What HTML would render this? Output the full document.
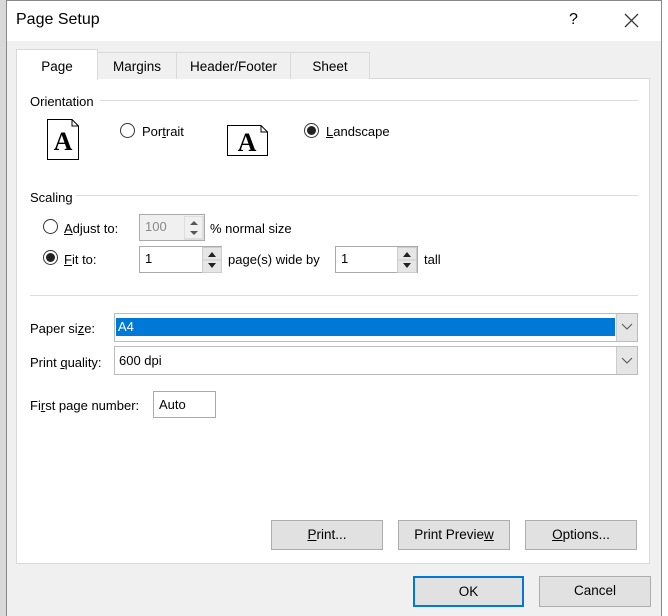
<!DOCTYPE html>
<html><head><style>
*{box-sizing:border-box;margin:0;padding:0}
body{width:668px;height:616px;overflow:hidden;background:#e8e8e8;font-family:"Liberation Sans",sans-serif;font-size:13px;color:#000;position:relative}
.a{position:absolute}
.sheetL{left:0;top:0;width:7px;height:616px;background:#d9d9d9}
.sheetR{left:661px;top:0;width:7px;height:616px;background:#fff}
.dlg{left:6px;top:0;width:656px;height:616px;background:#f0f0f0;border-left:1px solid #888;border-right:1px solid #888;border-top:1px solid #888}
.title{left:7px;top:1px;width:654px;height:40px;background:#fff}
.panel{left:16px;top:78px;width:634px;height:486px;background:#fff;border:1px solid #d9d9d9}
.tab{top:52px;height:27px;background:#f0f0f0;border:1px solid #d9d9d9;border-bottom:none;text-align:center;line-height:27px;font-size:13.5px}
.line{height:1px;background:#dcdcdc}
.radio{width:15px;height:15px;border:1px solid #333;border-radius:50%;background:#fff}
.radio.on::after{content:"";position:absolute;left:2px;top:2px;width:9px;height:9px;border-radius:50%;background:#222}
.box{border:1px solid #aaa;background:#fff;padding-left:5px;line-height:24px}
.btn{height:30px;background:#e1e1e1;border:1px solid #adadad;text-align:center;line-height:28px;font-size:13.5px}
u{text-decoration:underline}
</style></head><body>
<div class="a sheetL"></div><div class="a sheetR"></div>
<div class="a dlg"></div>
<div class="a title"></div>
<div class="a" style="left:16px;top:11px;font-size:16px">Page Setup</div>
<div class="a" style="left:569px;top:11px;font-size:16px">?</div>
<svg class="a" style="left:624px;top:13px" width="15" height="15"><path d="M1 1L14 14M14 1L1 14" stroke="#333" stroke-width="1.3"/></svg>
<div class="a panel"></div>
<div class="a tab" style="left:97px;width:80px">Margins</div>
<div class="a tab" style="left:176px;width:115px">Header/Footer</div>
<div class="a tab" style="left:290px;width:80px">Sheet</div>
<div class="a tab" style="left:16px;top:49px;height:31px;width:82px;background:#fff;line-height:34px">Page</div>

<div class="a" style="left:30px;top:94px">Orientation</div>
<div class="a line" style="left:100px;top:100px;width:538px"></div>
<svg class="a" style="left:46px;top:118px" width="34" height="43"><path d="M1.5 1.5H26L32.5 8V41.5H1.5Z" fill="#fff" stroke="#000"/><path d="M26 1.5V8H32.5" fill="none" stroke="#000"/><text x="17" y="32" text-anchor="middle" font-family="Liberation Serif" font-weight="bold" font-size="26">A</text></svg>
<div class="a radio" style="left:120px;top:123px"></div>
<div class="a" style="left:142px;top:124px">Por<u>t</u>rait</div>
<svg class="a" style="left:226px;top:124px" width="43" height="33"><path d="M1.5 1.5H35L41.5 8V31.5H1.5Z" fill="#fff" stroke="#000"/><path d="M35 1.5V8H41.5" fill="none" stroke="#000"/><text x="21" y="27" text-anchor="middle" font-family="Liberation Serif" font-weight="bold" font-size="26">A</text></svg>
<div class="a radio on" style="left:304px;top:123px"></div>
<div class="a" style="left:326px;top:124px"><u>L</u>andscape</div>

<div class="a" style="left:30px;top:190px">Scaling</div>
<div class="a line" style="left:76px;top:195px;width:562px"></div>
<div class="a radio" style="left:43px;top:219px"></div>
<div class="a" style="left:64px;top:221px"><u>A</u>djust to:</div>
<div class="a box" style="left:139px;top:214px;width:66px;height:27px;background:#f0f0f0;color:#888">100</div>
<div class="a" style="left:210px;top:221px">% normal size</div>
<div class="a radio on" style="left:43px;top:250px"></div>
<div class="a" style="left:64px;top:252px"><u>F</u>it to:</div>
<div class="a box" style="left:139px;top:246px;width:83px;height:27px">1</div>
<div class="a" style="left:228px;top:252px">page(s) wide by</div>
<div class="a box" style="left:335px;top:246px;width:83px;height:27px">1</div>
<div class="a" style="left:424px;top:252px">tall</div>
<svg class="a" style="left:184px;top:216px" width="20" height="24"><rect x="0" y="0" width="19" height="23" fill="#f0f0f0" stroke="#ccc"/><path d="M6 9L10 5L14 9Z M6 15L10 19L14 15Z" fill="#555"/></svg>
<svg class="a" style="left:202px;top:247px" width="20" height="26"><rect x="0.5" y="0.5" width="19" height="25" fill="#e6e6e6" stroke="#ccc"/><line x1="1" y1="13" x2="19" y2="13" stroke="#ccc"/><path d="M6 10L10 5L14 10Z M6 16L10 21L14 16Z" fill="#222"/></svg>
<svg class="a" style="left:397px;top:247px" width="20" height="26"><rect x="0.5" y="0.5" width="19" height="25" fill="#e6e6e6" stroke="#ccc"/><line x1="1" y1="13" x2="19" y2="13" stroke="#ccc"/><path d="M6 10L10 5L14 10Z M6 16L10 21L14 16Z" fill="#222"/></svg>

<div class="a line" style="left:30px;top:295px;width:608px"></div>
<div class="a" style="left:30px;top:321px">Paper si<u>z</u>e:</div>
<div class="a" style="left:114px;top:313px;width:524px;height:29px;border:1px solid #bbb;background:#fff"></div>
<div class="a" style="left:116px;top:318px;width:499px;height:18px;background:#0078d7;color:#fff;padding-left:2px;line-height:18px">A4</div>
<div class="a" style="left:616px;top:314px;width:21px;height:27px;background:#e5e5e5;border-left:1px solid #ccc"></div>
<svg class="a" style="left:621px;top:323px" width="12" height="8"><path d="M1 1L6 6L11 1" stroke="#555" fill="none"/></svg>
<div class="a" style="left:30px;top:355px">Print <u>q</u>uality:</div>
<div class="a" style="left:114px;top:346px;width:524px;height:29px;border:1px solid #bbb;background:#fff;padding-left:4px;line-height:28px">600 dpi</div>
<div class="a" style="left:616px;top:347px;width:21px;height:27px;background:#e5e5e5;border-left:1px solid #ccc"></div>
<svg class="a" style="left:621px;top:357px" width="12" height="8"><path d="M1 1L6 6L11 1" stroke="#555" fill="none"/></svg>
<div class="a" style="left:30px;top:398px">Fi<u>r</u>st page number:</div>
<div class="a box" style="left:153px;top:391px;width:63px;height:27px;line-height:25px">Auto</div>

<div class="a btn" style="left:271px;top:520px;width:112px"><u>P</u>rint...</div>
<div class="a btn" style="left:398px;top:520px;width:112px">Print Previe<u>w</u></div>
<div class="a btn" style="left:525px;top:520px;width:112px"><u>O</u>ptions...</div>
<div class="a btn" style="left:413px;top:576px;width:111px;height:31px;border:2px solid #0078d7">OK</div>
<div class="a btn" style="left:539px;top:576px;width:112px;height:31px">Cancel</div>
</body></html>
